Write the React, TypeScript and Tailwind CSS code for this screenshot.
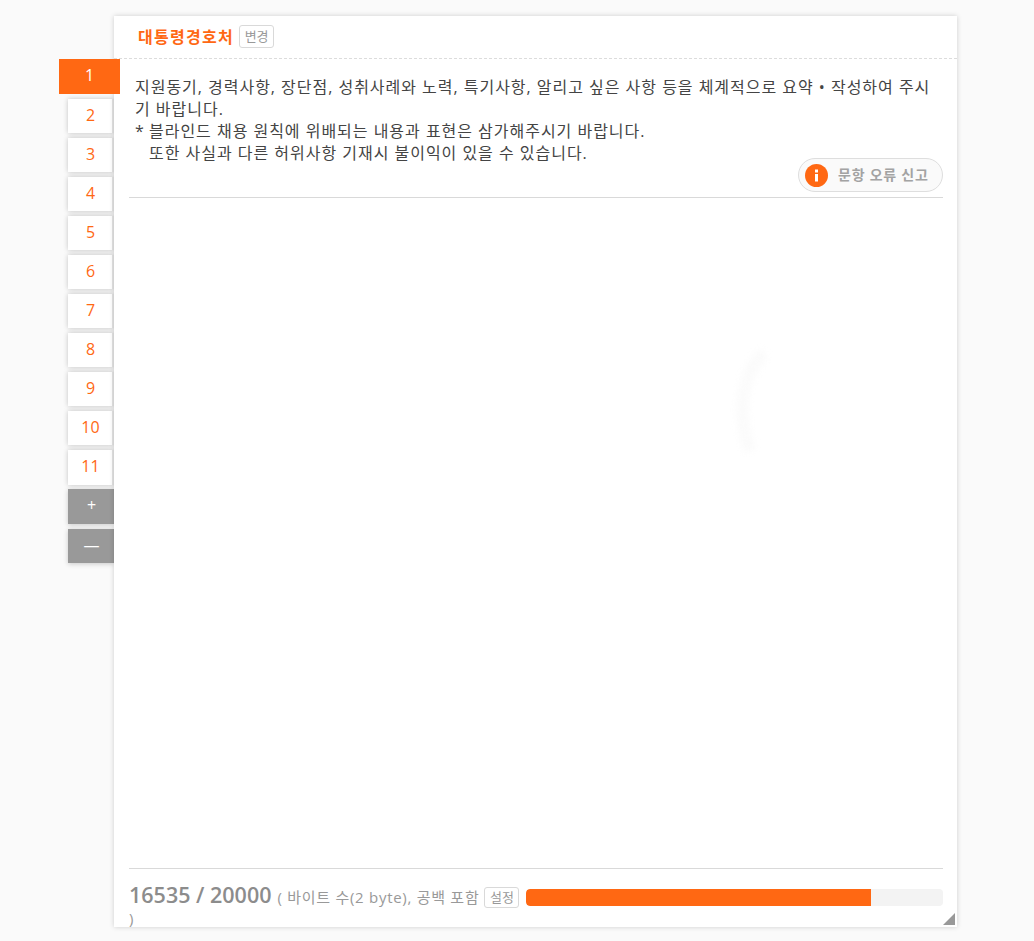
const font = { fontFamily: '"Open Sans","Noto Sans CJK KR",sans-serif' };

function Tab({ n, active, tall }: { n: string; active?: boolean; tall?: boolean }) {
  if (active) {
    return (
      <div className="relative z-10 -ml-[9px] mb-[5px] flex h-[35px] w-[61px] items-center justify-center bg-[#ff6813] pb-[3px] text-[16px] text-white">
        {n}
      </div>
    );
  }
  return (
    <div
      className={`flex w-[46px] items-center justify-center border-r-2 border-[#e4e4e4] bg-white pb-[3px] pl-[1px] text-[16px] text-[#ff6813] shadow-[0_0_5px_rgba(0,0,0,0.22)] ${tall ? "mb-[4px] h-[35px]" : "mb-[5px] h-[34px]"}`}
    >
      {n}
    </div>
  );
}

function ActionTab({ label, tall }: { label: string; tall?: boolean }) {
  return (
    <div
      className={`mb-[5px] flex w-[46px] items-center justify-center bg-[#999999] pb-[3px] pl-[1px] text-[16px] text-white shadow-[0_1px_5px_rgba(0,0,0,0.2)] ${tall ? "h-[35px]" : "h-[34px]"}`}
    >
      {label}
    </div>
  );
}

export default function App() {
  return (
    <div style={font} className="flex h-[941px] w-[1034px] overflow-hidden bg-[#fafafa] pl-[68px] pt-[16px]">
      <div className="flex w-[46px] shrink-0 flex-col pt-[43px]">
        <Tab n="1" active />
        <Tab n="2" />
        <Tab n="3" />
        <Tab n="4" />
        <Tab n="5" />
        <Tab n="6" />
        <Tab n="7" />
        <Tab n="8" />
        <Tab n="9" />
        <Tab n="10" />
        <Tab n="11" tall />
        <ActionTab label="+" tall />
        <ActionTab label="—" />
      </div>

      <div className="relative flex h-[911px] w-[843px] shrink-0 flex-col overflow-hidden bg-white shadow-[0_0_5px_rgba(0,0,0,0.18)]">
        <div className="flex h-[43px] shrink-0 items-center border-b border-dashed border-[#dcdcdc] pb-[1px] pl-[24px]">
          <span className="text-[16px] font-semibold tracking-[1.3px] text-[#ff6813]">대통령경호처</span>
          <span className="ml-[5px] flex h-[23px] w-[35px] items-center justify-center rounded-[3px] border border-[#d9d9d9] text-[13px] text-[#999999]">
            변경
          </span>
        </div>

        <div className="flex shrink-0 flex-col pl-[15px] pr-[14px]">
          <div className="relative h-[139px] border-b border-[#d9d9d9] pl-[6px] pr-[6px] pt-[17px] text-[16px] leading-[22px] tracking-[0.98px] text-[#444444]">
            <p>지원동기, 경력사항, 장단점, 성취사례와 노력, 특기사항, 알리고 싶은 사항 등을 체계적으로 요약 • 작성하여 주시기 바랍니다.</p>
            <p>
              <span className="inline-block w-[14px]">*</span>블라인드 채용 원칙에 위배되는 내용과 표현은 삼가해주시기 바랍니다.
            </p>
            <p className="pl-[14px]">또한 사실과 다른 허위사항 기재시 불이익이 있을 수 있습니다.</p>
            <div className="absolute bottom-[5px] right-0 flex h-[34px] w-[145px] items-center rounded-full border border-[#dedede] bg-[#fafafa] pl-[6px] tracking-normal">
              <span className="flex h-[23px] w-[23px] items-center justify-center rounded-full bg-[#ff6813]">
                <svg width="5" height="13" viewBox="0 0 5 13">
                  <rect x="1" y="0.5" width="3" height="3" fill="#fff" />
                  <rect x="1" y="5" width="3" height="7.5" fill="#fff" />
                </svg>
              </span>
              <span className="ml-[10px] text-[14px] font-semibold tracking-[0.75px] text-[#a3a3a3]">문항 오류 신고</span>
            </div>
          </div>
        </div>

        <div className="relative min-h-0 flex-1">
          <svg className="absolute left-[610px] top-[145px] blur-[3px]" width="60" height="120" viewBox="0 0 60 120">
            <path d="M40 10 C18 30 12 70 26 108" fill="none" stroke="#fbfbfb" strokeWidth="12" />
          </svg>
        </div>

        <div className="h-[59px] shrink-0 pl-[15px] pr-[14px]">
          <div className="border-t border-[#d9d9d9] pt-[12px] text-[15px] leading-[25px] tracking-[0.72px] text-[#999999]">
            <div className="float-right mt-[8px] h-[17px] w-[417px] overflow-hidden rounded-[4px] bg-[#f3f3f3]">
              <div className="h-full rounded-l-[4px] bg-[#ff6813]" style={{ width: `${(16535 / 20000) * 100}%` }} />
            </div>
            <span className="text-[21.5px] font-semibold leading-[28px] tracking-normal text-[#8c8c8c]">16535 / 20000</span>
            <span className="ml-[6px]">( 바이트 수(2 byte), 공백 포함</span>
            <span className="ml-[5px] inline-flex h-[21px] w-[35px] items-center justify-center rounded-[3px] border border-[#d9d9d9] align-[1px] text-[13px] leading-none tracking-normal text-[#999999]">
              설정
            </span>
            <br />
            <span className="relative -top-[4px]">)</span>
          </div>
        </div>

        <div className="absolute bottom-[2px] right-[2px] h-0 w-0 border-b-[12px] border-l-[12px] border-b-[#999999] border-l-transparent" />
      </div>
    </div>
  );
}
